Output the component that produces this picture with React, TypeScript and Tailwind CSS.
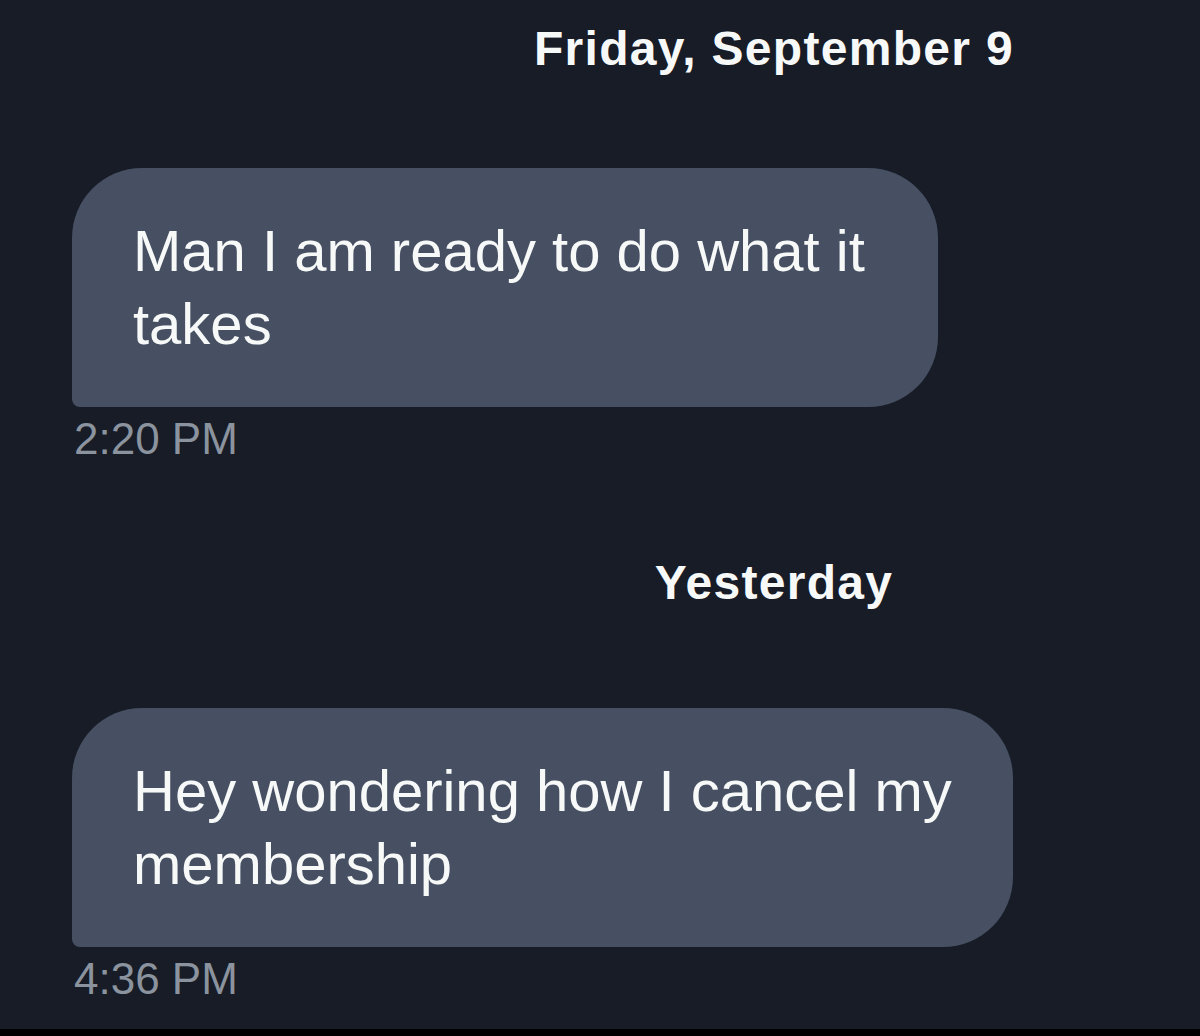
import React from 'react'

interface Message {
  day: string
  text: string
  time: string
  width: string
}

const messages: Message[] = [
  { day: 'Friday, September 9', text: 'Man I am ready to do what it takes', time: '2:20 PM', width: 'w-[866px]' },
  { day: 'Yesterday', text: 'Hey wondering how I cancel my membership', time: '4:36 PM', width: 'w-[941px]' },
]

function DayLabel({ label }: { label: string }) {
  return (
    <div className="flex justify-center pl-[348px]">
      <span className="text-[48px] leading-[1.2] font-bold tracking-[1.3px] text-[#f7f9f9]">{label}</span>
    </div>
  )
}

function Bubble({ msg }: { msg: Message }) {
  return (
    <div className="pl-[72px]">
      <div
        className={`${msg.width} bg-[#465062] rounded-[70px] rounded-bl-[8px] pl-[61px] pr-[46px] pt-[46px] pb-[47px] text-[58px] leading-[73px] text-[#f7f9f9]`}
      >
        {msg.text}
      </div>
      <div className="mt-[6px] pl-[2px] text-[44px] leading-[1.2] text-[#8b939e]">{msg.time}</div>
    </div>
  )
}

export default function App() {
  return (
    <div
      className="min-h-[1036px] w-[1200px] bg-[#171c27] flex flex-col overflow-hidden"
      style={{ fontFamily: '"Liberation Sans", Arial, sans-serif' }}
    >
      <div className="pt-[20px]">
        <DayLabel label={messages[0].day} />
      </div>
      <div className="mt-[90px]">
        <Bubble msg={messages[0]} />
      </div>
      <div className="mt-[89px]">
        <DayLabel label={messages[1].day} />
      </div>
      <div className="mt-[96px]">
        <Bubble msg={messages[1]} />
      </div>
      <div className="flex-1" />
      <div className="h-[7px] bg-black" />
    </div>
  )
}
